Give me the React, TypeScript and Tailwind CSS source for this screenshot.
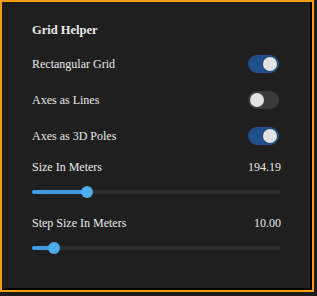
import { FC } from 'react';

const Toggle: FC<{ on: boolean }> = ({ on }) => (
  <div
    className={`mr-[2px] w-[31px] h-[18px] rounded-full flex items-center px-[2px] ${
      on ? 'bg-[#1f4f86] justify-end' : 'bg-[#3a3a3a] justify-start'
    }`}
  >
    <div className="w-[14px] h-[14px] rounded-full bg-[#e2e2e2]" />
  </div>
);

const Slider: FC<{ pct: number }> = ({ pct }) => (
  <div className="relative h-[12px] flex items-center">
    <div className="w-full h-[4px] rounded-full bg-[#2b2b2b]" />
    <div
      className="absolute left-0 h-[4px] rounded-full bg-[#3f9be6]"
      style={{ width: `${pct}%` }}
    />
    <div
      className="absolute w-[12px] h-[12px] rounded-full bg-[#4fabea] -translate-x-1/2"
      style={{ left: `${pct}%` }}
    />
  </div>
);

const toggles = [
  { label: 'Rectangular Grid', on: true },
  { label: 'Axes as Lines', on: false },
  { label: 'Axes as 3D Poles', on: true },
];

export default function App() {
  return (
    <div className="w-[317px] h-[296px] bg-[#1c1c1c]">
      <div className="w-[314px] h-[292px] border-2 border-[#f59e0b]">
        <div className="w-full h-full bg-[#1f1f1f] border-r-2 border-b-2 border-black pl-[30px] pr-[29px] pt-[19px] text-[#e8e8e8] text-[12px] font-['Liberation_Serif','Times_New_Roman',serif]">
          <div className="font-bold text-[12.5px] h-[18px] leading-[18px]">Grid Helper</div>

          {/* Toggles */}
          <div className="mt-[16px] flex flex-col gap-[18px]">
            {toggles.map((t) => (
              <div key={t.label} className="flex justify-between items-center h-[18px]">
                <span>{t.label}</span>
                <Toggle on={t.on} />
              </div>
            ))}
          </div>

          {/* Sliders */}
          <div className="mt-[13px] flex justify-between h-[18px] items-center">
            <span>Size In Meters</span>
            <span>194.19</span>
          </div>
          <div className="mt-[10px]">
            <Slider pct={22} />
          </div>
          <div className="mt-[16px] flex justify-between h-[18px] items-center">
            <span>Step Size In Meters</span>
            <span>10.00</span>
          </div>
          <div className="mt-[10px]">
            <Slider pct={9} />
          </div>
        </div>
      </div>
    </div>
  );
}
